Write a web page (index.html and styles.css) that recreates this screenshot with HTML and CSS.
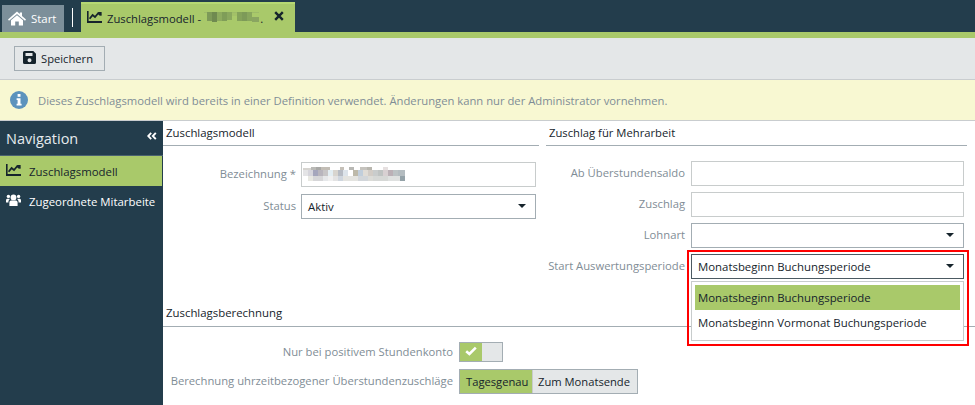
FILE: index.html
```html
<!DOCTYPE html>
<html lang="de">
<head>
<meta charset="utf-8">
<title>Zuschlagsmodell</title>
<link rel="stylesheet" href="styles.css">
</head>
<body>
<div class="app">
  <header class="tabbar">
    <div class="tab tab-home">
      <svg class="ico-home" viewBox="0 0 18 15"><path fill="#fff" d="M9 0.5 L11.8 3 V1.5 H14 V5 L18 8.6 L17 9.8 L9 2.9 L1 9.8 L0 8.6 Z M3 9.3 L9 4.2 L15 9.3 V14.5 H10.8 V10.6 H7.2 V14.5 H3 Z"/></svg>
      <span>Start</span>
    </div>
    <div class="tab-sep"></div>
    <div class="tab tab-active">
      <svg class="ico-chart" viewBox="0 0 15 12"><path d="M0 0 H1.6 V10 H15 V12 H0 Z" fill="#16242c"/><path d="M2.6 7.8 L5.6 4 L8 6 L11.2 2.2 L13.8 4.4" fill="none" stroke="#16242c" stroke-width="1.8"/><path d="M10.6 1 H14.6 V5 Z" fill="#16242c"/></svg>
      <span class="tab-title">Zuschlagsmodell -</span>
      <svg class="blur-tab" viewBox="0 0 55 10" shape-rendering="crispEdges">
        <g fill="#9dbb68"><rect x="0" y="0" width="55" height="1"/></g>
        <rect x="3" y="0" width="5" height="9" fill="#7d9a58"/><rect x="8" y="0" width="5" height="10" fill="#6f8a50"/><rect x="13" y="0" width="5" height="9" fill="#8dab5f"/><rect x="18" y="0" width="5" height="9" fill="#7f9d58"/><rect x="23" y="0" width="5" height="8" fill="#8aa85e"/><rect x="28" y="1" width="5" height="3" fill="#a3c168"/><rect x="33" y="0" width="5" height="9" fill="#84a25a"/><rect x="38" y="0" width="5" height="9" fill="#7d9a58"/><rect x="43" y="0" width="5" height="9" fill="#88a65d"/><rect x="48" y="5" width="7" height="5" fill="#8aa561"/>
      </svg>
      <span class="tab-dot">.</span>
      <svg class="ico-x" viewBox="0 0 10 10"><path d="M1.2 1.2 L8.8 8.8 M8.8 1.2 L1.2 8.8" stroke="#16242c" stroke-width="2.4" fill="none"/></svg>
    </div>
  </header>
  <div class="toolbar">
    <button class="btn-save" type="button">
      <svg class="ico-save" viewBox="0 0 13 13"><path fill="#16242c" fill-rule="evenodd" d="M1.5 0 H10.3 L13 2.7 V11.5 A1.5 1.5 0 0 1 11.5 13 H1.5 A1.5 1.5 0 0 1 0 11.5 V1.5 A1.5 1.5 0 0 1 1.5 0 Z M2.5 2 V5 H9.5 V2 Z M6.5 7.2 A2 2 0 1 0 6.5 11.2 A2 2 0 1 0 6.5 7.2 Z"/></svg>
      Speichern
    </button>
  </div>
  <div class="notice">
    <svg class="ico-info" viewBox="0 0 18 18"><circle cx="9" cy="9" r="9" fill="#5c93bd"/><rect x="7.6" y="3" width="2.9" height="2.8" fill="#fff"/><path d="M6.6 7.2 H10.5 V12.8 H11.6 V14.6 H6.6 V12.8 H7.6 V9 H6.6 Z" fill="#fff"/></svg>
    <span>Dieses Zuschlagsmodell wird bereits in einer Definition verwendet. Änderungen kann nur der Administrator vornehmen.</span>
  </div>
  <div class="body">
    <nav class="sidebar">
      <div class="nav-head">
        <span>Navigation</span>
        <svg class="ico-collapse" viewBox="0 0 10 8"><path d="M4.2 0.8 L1.2 4 L4.2 7.2 M8.8 0.8 L5.8 4 L8.8 7.2" fill="none" stroke="#fff" stroke-width="1.9"/></svg>
      </div>
      <div class="nav-item nav-active">
        <svg class="ico-nav" viewBox="0 0 15 12"><path d="M0 0 H1.6 V10 H15 V12 H0 Z" fill="#16242c"/><path d="M2.6 7.8 L5.6 4 L8 6 L11.2 2.2 L13.8 4.4" fill="none" stroke="#16242c" stroke-width="1.8"/><path d="M10.6 1 H14.6 V5 Z" fill="#16242c"/></svg>
        <span>Zuschlagsmodell</span>
      </div>
      <div class="nav-item">
        <svg class="ico-nav" viewBox="0 0 15 12"><g fill="#fff"><circle cx="7.5" cy="3.4" r="2.9"/><circle cx="2.4" cy="2.4" r="1.7"/><circle cx="12.6" cy="2.4" r="1.7"/><path d="M3.4 12 V8.6 C3.4 7 4.6 6.6 5.6 6.6 H9.4 C10.4 6.6 11.6 7 11.6 8.6 V12 Z"/><path d="M0 8.6 V6.4 C0 5.2 1 4.8 1.8 4.8 H3.4 L3.6 5.6 C2.8 6 2.4 6.8 2.4 8.6 Z"/><path d="M15 8.6 V6.4 C15 5.2 14 4.8 13.2 4.8 H11.6 L11.4 5.6 C12.2 6 12.6 6.8 12.6 8.6 Z"/></g></svg>
        <span>Zugeordnete Mitarbeite</span>
      </div>
    </nav>
    <main class="content">
      <div class="columns">
        <section class="col-left">
          <h2 class="sec-title">Zuschlagsmodell</h2>
          <div class="rows">
            <div class="row"><label class="lbl lbl-left">Bezeichnung *</label><div class="input input-left">
              <svg class="blur-value" viewBox="0 0 102 14" shape-rendering="crispEdges">
                <g fill="#d6d4d0"><rect x="0" y="1" width="8" height="2"/><rect x="8" y="0" width="5" height="3" fill="#b9b9b6"/><rect x="13" y="0" width="5" height="3" fill="#a8a8a6"/><rect x="18" y="0" width="9" height="3" fill="#c2bdb5"/><rect x="37" y="0" width="4" height="3" fill="#c5c0b8"/><rect x="46" y="0" width="5" height="3" fill="#b8b8b4"/><rect x="57" y="0" width="7" height="3" fill="#c5c3be"/><rect x="64" y="0" width="5" height="3" fill="#b8b6ae"/><rect x="80" y="0" width="5" height="3" fill="#e6e0e0"/></g>
                <rect x="0" y="3" width="5" height="6" fill="#e4e4e6"/><rect x="5" y="3" width="5" height="6" fill="#d6d5dc"/><rect x="10" y="3" width="5" height="6" fill="#a5a6bc"/><rect x="15" y="3" width="5" height="6" fill="#b8b5bd"/><rect x="20" y="3" width="5" height="6" fill="#c7c5c6"/><rect x="25" y="3" width="5" height="6" fill="#e3eef3"/><rect x="30" y="3" width="5" height="6" fill="#d8d5cf"/><rect x="35" y="3" width="5" height="6" fill="#b7bcc4"/><rect x="40" y="3" width="5" height="6" fill="#dde4ea"/><rect x="45" y="3" width="5" height="6" fill="#fff"/><rect x="50" y="3" width="5" height="6" fill="#bdb9a9"/><rect x="55" y="3" width="5" height="6" fill="#c1cedb"/><rect x="60" y="3" width="5" height="6" fill="#e0dcd6"/><rect x="65" y="3" width="5" height="6" fill="#d2ccc6"/><rect x="70" y="3" width="5" height="6" fill="#c9cccc"/><rect x="75" y="3" width="5" height="6" fill="#bfc3c2"/><rect x="80" y="3" width="5" height="6" fill="#d8d0d2"/><rect x="85" y="3" width="5" height="6" fill="#bbb0b6"/><rect x="90" y="3" width="5" height="6" fill="#bcc2c4"/><rect x="95" y="3" width="7" height="6" fill="#b4bcc0"/>
                <rect x="5" y="9" width="5" height="5" fill="#e8e8e2"/><rect x="10" y="9" width="10" height="5" fill="#d6d6d8"/><rect x="20" y="9" width="5" height="5" fill="#e6e8ea"/><rect x="25" y="9" width="5" height="5" fill="#f0f0f0"/><rect x="30" y="9" width="5" height="5" fill="#e3e3e3"/><rect x="35" y="9" width="5" height="5" fill="#cfd6de"/><rect x="40" y="9" width="15" height="5" fill="#e4e4e0"/><rect x="55" y="9" width="10" height="5" fill="#d2d6da"/><rect x="65" y="9" width="5" height="5" fill="#dcdcd8"/><rect x="70" y="9" width="15" height="5" fill="#d6d8d6"/><rect x="85" y="9" width="12" height="5" fill="#dfe1e0"/><rect x="97" y="9" width="5" height="5" fill="#94a2a8"/>
              </svg>
            </div></div>
            <div class="row"><label class="lbl lbl-left">Status</label><div class="input input-left select"><span>Aktiv</span><b class="caret"></b></div></div>
          </div>
        </section>
        <section class="col-right">
          <h2 class="sec-title">Zuschlag für Mehrarbeit</h2>
          <div class="rows rows-tight">
            <div class="row"><label class="lbl lbl-right">Ab Überstundensaldo</label><div class="input input-right"></div></div>
            <div class="row"><label class="lbl lbl-right">Zuschlag</label><div class="input input-right"></div></div>
            <div class="row"><label class="lbl lbl-right">Lohnart</label><div class="input input-right select"><span></span><b class="caret"></b></div></div>
            <div class="row"><label class="lbl lbl-right">Start Auswertungsperiode</label><div class="input input-right select select-open"><span>Monatsbeginn Buchungsperiode</span><b class="caret"></b></div></div>
          </div>
        </section>
      </div>
      <section class="calc">
        <h2 class="sec-title">Zuschlagsberechnung</h2>
        <div class="calc-rows">
          <div class="row"><label class="lbl lbl-calc">Nur bei positivem Stundenkonto</label>
            <div class="toggle"><span class="toggle-on"><svg class="ico-check" viewBox="0 0 12 10"><path d="M1.2 5.2 L4.4 8 L10.8 1.6" fill="none" stroke="#fff" stroke-width="2.6"/></svg></span><span class="toggle-off"></span></div>
          </div>
          <div class="row"><label class="lbl lbl-calc">Berechnung uhrzeitbezogener Überstundenzuschläge</label>
            <div class="segmented"><span class="seg seg-on">Tagesgenau</span><span class="seg">Zum Monatsende</span></div>
          </div>
        </div>
      </section>
    </main>
  </div>
  <div class="dropdown">
    <div class="option option-on">Monatsbeginn Buchungsperiode</div>
    <div class="option">Monatsbeginn Vormonat Buchungsperiode</div>
  </div>
  <div class="highlight"></div>
</div>
</body>
</html>
```

FILE: styles.css
```css
* { box-sizing: border-box; }
html, body { margin: 0; padding: 0; height: 100%; overflow: hidden; background: #fff; }
body { font-family: "Open Sans", "Noto Sans", sans-serif; font-size: 11.4px; color: #16242c; }
.app { position: relative; width: 975px; height: 405px; overflow: hidden; display: flex; flex-direction: column; }

.tabbar { height: 38px; flex: none; background: #233d4c; border-bottom: 6px solid #a9c96a; display: flex; align-items: flex-end; padding-left: 2px; }
.tab { display: flex; align-items: center; height: 27px; }
.tab-home { width: 62px; background: #7c8f9a; color: #fff; padding-left: 6px; gap: 5px; }
.ico-home { width: 18px; height: 15px; }
.tab-sep { width: 1px; height: 19px; background: #fff; margin: 0 8px 5px 8px; align-self: flex-end; }
.tab-active { width: 214px; height: 30px; background: #a9c96a; padding-left: 6px; border-top: 2px solid #b6d873; position: relative; }
.ico-chart { width: 15px; height: 12px; margin-right: 5px; margin-top: -3px; }
.tab-title { white-space: nowrap; margin-right: 3px; font-size: 11.25px; }
.blur-tab { width: 55px; height: 10px; flex: none; margin-top: -2px; }
.tab-dot { margin-left: 1px; }
.ico-x { width: 10px; height: 10px; margin-left: 11px; margin-top: -5px; }

.toolbar { height: 42px; flex: none; background: #e4e7e8; border-bottom: 1px solid #c9cdcf; padding: 8px 14px; }
.btn-save { width: 91px; height: 25px; display: flex; align-items: center; gap: 5px; padding: 0 0 0 8px; background: #e4e7e8; border: 1px solid #a3adb3; font: inherit; font-size: 11.2px; color: #16242c; border-radius: 0; }
.ico-save { width: 13px; height: 13px; margin-top: -3px; }

.notice { height: 41px; flex: none; background: #f8f8d2; border-bottom: 1px solid #c9cdcf; display: flex; align-items: center; gap: 10px; padding: 0 0 0 10px; color: #7f8d96; font-size: 11.25px; }
.ico-info { width: 18px; height: 18px; }

.body { flex: 1; display: flex; min-height: 0; }
.sidebar { width: 163px; flex: none; background: #233d4c; color: #fff; }
.nav-head { height: 35px; border-bottom: 1px solid #4a6270; display: flex; align-items: center; justify-content: space-between; padding: 0 6px 0 6px; font-size: 14.5px; color: #e6ebee; }
.ico-collapse { width: 10px; height: 8px; margin-top: -4px; }
.nav-item { height: 30px; display: flex; align-items: center; gap: 8px; padding-left: 6px; white-space: nowrap; }
.nav-active { width: 162px; background: #a9c96a; color: #16242c; }
.ico-nav { width: 15px; height: 12px; flex: none; margin-top: -3px; }

.content { flex: 1; display: flex; flex-direction: column; min-width: 0; }
.columns { display: flex; height: 180px; flex: none; }
.col-left { width: 376px; flex: none; margin-right: 7px; }
.col-right { width: 421px; flex: none; }
.sec-title { margin: 0; font-size: 11.4px; font-weight: 400; color: #16242c; height: 25px; line-height: 23px; padding-left: 3px; border-bottom: 1px solid #a3adb3; }
.col-right .sec-title { padding-left: 3px; font-size: 11.25px; }
.rows { display: flex; flex-direction: column; gap: 7px; padding-top: 16px; }
.rows-tight { gap: 6px; padding-top: 15px; }
.row { display: flex; align-items: center; }
.lbl { text-align: right; color: #7f8d96; white-space: nowrap; flex: none; font-size: 11.25px; padding-bottom: 2px; }
.lbl-left { width: 133px; margin-right: 5px; }
.lbl-right { width: 139px; margin-right: 6px; }
.input { height: 25px; border: 1px solid #c8cccc; background: #fff; display: flex; align-items: center; padding: 0 6px 1px; flex: none; }
.input-left { width: 235px; }
.input-right { width: 273px; }
.select { border-color: #a3adb3; justify-content: space-between; color: #16242c; }
.select-open { border-color: #4c5a62; }
.caret { width: 0; height: 0; border-left: 4px solid transparent; border-right: 4px solid transparent; border-top: 4px solid #16242c; margin-right: 3px; }
.blur-value { width: 102px; height: 14px; flex: none; margin-left: -5px; }

.calc { flex: 1; }
.calc .sec-title { height: 26px; line-height: 24px; }
.calc-rows { display: flex; flex-direction: column; gap: 7px; padding-top: 15px; }
.lbl-calc { width: 290px; margin-right: 6px; }
.toggle { width: 44px; height: 20px; border: 1px solid #a3adb3; display: flex; background: #e4e7e8; }
.toggle-on { width: 22px; background: #a9c96a; display: flex; align-items: center; justify-content: center; padding-bottom: 2px; }
.ico-check { width: 12px; height: 10px; }
.segmented { display: flex; height: 25px; border: 1px solid #a3adb3; background: #e4e7e8; font-size: 11.2px; }
.seg { display: flex; align-items: center; padding: 0 0 1px 6px; white-space: nowrap; }
.seg-on { width: 72px; background: #a9c96a; }
.seg + .seg { border-left: 1px solid #c8cccc; width: 105px; padding-left: 5px; }

.dropdown { position: absolute; left: 691px; top: 281px; width: 273px; height: 60px; border: 1px solid #c8cccc; background: #fff; padding: 3px; }
.option { height: 25px; line-height: 25px; padding-left: 3px; white-space: nowrap; }
.option-on { background: #a9c96a; }
.highlight { position: absolute; left: 687px; top: 250px; width: 282px; height: 96px; border: 2px solid #f00; }
```
